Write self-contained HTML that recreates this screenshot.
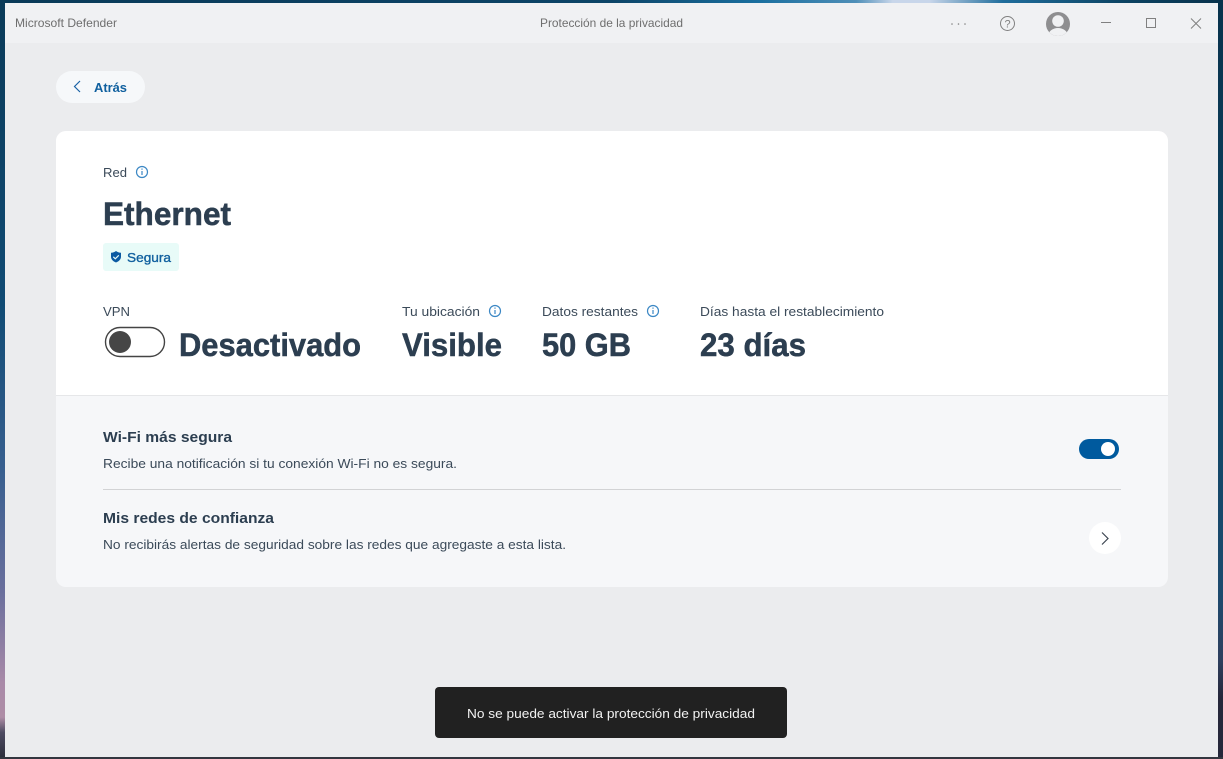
<!DOCTYPE html>
<html lang="es">
<head>
<meta charset="utf-8">
<title>Microsoft Defender</title>
<style>
html,body{margin:0;padding:0;width:1223px;height:759px;overflow:hidden;background:#0a3d5c}
svg{display:block;position:absolute;left:0;top:0}
text{font-family:"Liberation Sans",sans-serif;white-space:pre}
.b{font-weight:700;fill:#2c3e50}
.h{stroke:#2c3e50;stroke-width:.5px}
.r{fill:#3b4a59;font-size:13px}
</style>
</head>
<body>
<svg width="1223" height="759" viewBox="0 0 1223 759" xmlns="http://www.w3.org/2000/svg">
<defs>
<linearGradient id="top" x1="0" x2="1" y1="0" y2="0">
<stop offset="0" stop-color="#0a3a58"/>
<stop offset=".5" stop-color="#0c4467"/>
<stop offset=".62" stop-color="#1a6f9f"/>
<stop offset=".7" stop-color="#4f8fb8"/>
<stop offset=".73" stop-color="#c8d6ea"/>
<stop offset=".76" stop-color="#c8d6ea"/>
<stop offset=".82" stop-color="#1f6d9c"/>
<stop offset=".92" stop-color="#0c4362"/>
<stop offset="1" stop-color="#08324c"/>
</linearGradient>
<linearGradient id="left" x1="0" x2="0" y1="0" y2="1">
<stop offset="0" stop-color="#0a3a58"/>
<stop offset=".4" stop-color="#104b74"/>
<stop offset=".62" stop-color="#385f8f"/>
<stop offset=".78" stop-color="#6a6f9d"/>
<stop offset=".9" stop-color="#a98aa8"/>
<stop offset=".945" stop-color="#ae8da6"/>
<stop offset=".965" stop-color="#4e4c62"/>
<stop offset="1" stop-color="#2b2d3a"/>
</linearGradient>
<linearGradient id="right" x1="0" x2="0" y1="0" y2="1">
<stop offset="0" stop-color="#08324c"/>
<stop offset=".5" stop-color="#0e4666"/>
<stop offset=".78" stop-color="#1c4a6e"/>
<stop offset=".87" stop-color="#2e3f5e"/>
<stop offset=".92" stop-color="#25273a"/>
<stop offset="1" stop-color="#25273a"/>
</linearGradient>
<clipPath id="av"><circle cx="1058" cy="24" r="12"/></clipPath>
</defs>

<!-- wallpaper -->
<rect x="0" y="0" width="6" height="759" fill="url(#left)"/>
<rect x="1217" y="0" width="6" height="759" fill="url(#right)"/>
<rect x="0" y="0" width="1223" height="3" fill="url(#top)"/>
<rect x="0" y="757" width="1223" height="2" fill="#33363f"/>

<!-- window -->
<rect x="5" y="3" width="1213" height="754" fill="#ebecee"/>
<rect x="5" y="3" width="1213" height="40" fill="#f0f1f3"/>

<text x="15" y="27" font-size="12" fill="#6e6e6e" textLength="102" lengthAdjust="spacingAndGlyphs">Microsoft Defender</text>
<text x="540" y="27" font-size="12" fill="#6e6e6e" textLength="143" lengthAdjust="spacingAndGlyphs">Protección de la privacidad</text>

<!-- title bar controls -->
<circle cx="952" cy="24" r=".8" fill="#808080"/>
<circle cx="958.500" cy="24" r=".8" fill="#808080"/>
<circle cx="965" cy="24" r=".8" fill="#808080"/>
<circle cx="1007.500" cy="23.500" r="7" fill="none" stroke="#808080" stroke-width="1"/>
<text x="1007.500" y="27.500" font-size="11" fill="#808080" text-anchor="middle">?</text>
<circle cx="1058" cy="24" r="12" fill="#8e8e90"/>
<g clip-path="url(#av)">
<circle cx="1058" cy="21" r="5.800" fill="#f0f1f3"/>
<ellipse cx="1058" cy="36" rx="10" ry="8" fill="#f0f1f3"/>
</g>
<rect x="1101" y="22" width="10" height="1" fill="#808080"/>
<rect x="1146.500" y="18.500" width="9" height="9" fill="none" stroke="#808080" stroke-width="1"/>
<path d="M1191 18.500L1201 28.500M1201 18.500L1191 28.500" stroke="#808080" stroke-width="1" fill="none"/>

<!-- back -->
<rect x="56" y="71" width="89" height="32" rx="16" fill="#f6f8fa"/>
<path d="M80 81L74.500 86.500L80 92" fill="none" stroke="#1a62a5" stroke-width="1.200"/>
<text x="94" y="92" font-size="13" font-weight="700" fill="#10609f" textLength="33" lengthAdjust="spacingAndGlyphs">Atrás</text>

<!-- card -->
<rect x="56" y="131" width="1112" height="456" rx="10" fill="#f6f7f9"/>
<path d="M56 395V141a10 10 0 0 1 10-10H1158a10 10 0 0 1 10 10V395Z" fill="#fff"/>
<rect x="56" y="395" width="1112" height="1" fill="#e6e7e9"/>

<text x="103" y="177" class="r" textLength="24" lengthAdjust="spacingAndGlyphs">Red</text>
<g fill="none" stroke="#3b87c4" stroke-width="1.200">
<circle cx="142" cy="172" r="5.500"/>
<path d="M142 171v4M142 168.500v1.200"/>
</g>

<text x="103" y="225" font-size="32" class="b h" textLength="128" lengthAdjust="spacingAndGlyphs">Ethernet</text>

<rect x="103" y="243" width="76" height="28" rx="3" fill="#e8fbf8"/>
<path d="M116 251c1.500 1.200 3 1.700 5 1.800v3.700c0 3-2 4.800-5 6-3-1.200-5-3-5-6v-3.700c2-.1 3.500-.6 5-1.800z" fill="#0b5aa2"/>
<path d="M113.300 256.800l2 2 3.500-3.500" fill="none" stroke="#e8fbf8" stroke-width="1.200"/>
<text x="127" y="262" font-size="13" fill="#10609f" textLength="44" lengthAdjust="spacingAndGlyphs" style="stroke:#10609f;stroke-width:.35px">Segura</text>

<!-- stats -->
<text x="103" y="316" class="r" textLength="27" lengthAdjust="spacingAndGlyphs">VPN</text>
<rect x="105.500" y="327.500" width="59" height="29" rx="14.500" fill="#fff" stroke="#444" stroke-width="1.400"/>
<circle cx="120" cy="342" r="11" fill="#464646"/>
<text x="179" y="356" font-size="32" class="b h" textLength="182" lengthAdjust="spacingAndGlyphs">Desactivado</text>

<text x="402" y="316" class="r" textLength="78" lengthAdjust="spacingAndGlyphs">Tu ubicación</text>
<g fill="none" stroke="#3b87c4" stroke-width="1.200">
<circle cx="495" cy="311" r="5.500"/>
<path d="M495 310v4M495 307.500v1.200"/>
</g>
<text x="402" y="356" font-size="32" class="b h" textLength="100" lengthAdjust="spacingAndGlyphs">Visible</text>

<text x="542" y="316" class="r" textLength="96" lengthAdjust="spacingAndGlyphs">Datos restantes</text>
<g fill="none" stroke="#3b87c4" stroke-width="1.200">
<circle cx="653" cy="311" r="5.500"/>
<path d="M653 310v4M653 307.500v1.200"/>
</g>
<text x="542" y="356" font-size="32" class="b h" textLength="89" lengthAdjust="spacingAndGlyphs">50 GB</text>

<text x="700" y="316" class="r" textLength="184" lengthAdjust="spacingAndGlyphs">Días hasta el restablecimiento</text>
<text x="700" y="356" font-size="32" class="b h" textLength="106" lengthAdjust="spacingAndGlyphs">23 días</text>

<!-- rows -->
<text x="103" y="442" font-size="15" class="b" textLength="129" lengthAdjust="spacingAndGlyphs">Wi-Fi más segura</text>
<text x="103" y="468" class="r" textLength="354" lengthAdjust="spacingAndGlyphs">Recibe una notificación si tu conexión Wi-Fi no es segura.</text>
<rect x="1079" y="439" width="40" height="20" rx="10" fill="#005a9e"/>
<circle cx="1108" cy="449" r="7" fill="#fff"/>

<rect x="103" y="489" width="1018" height="1" fill="#d2d3d5"/>

<text x="103" y="523" font-size="15" class="b" textLength="171" lengthAdjust="spacingAndGlyphs">Mis redes de confianza</text>
<text x="103" y="549" class="r" textLength="463" lengthAdjust="spacingAndGlyphs">No recibirás alertas de seguridad sobre las redes que agregaste a esta lista.</text>
<circle cx="1105" cy="538" r="16" fill="#fff"/>
<path d="M1102 532.500l6 6-6 6" fill="none" stroke="#3b4450" stroke-width="1.200"/>

<!-- toast -->
<rect x="435" y="687" width="352" height="51" rx="4" fill="#212121"/>
<text x="467" y="718" font-size="13" fill="#f2f2f2" textLength="288" lengthAdjust="spacingAndGlyphs">No se puede activar la protección de privacidad</text>
</svg>
</body>
</html>
